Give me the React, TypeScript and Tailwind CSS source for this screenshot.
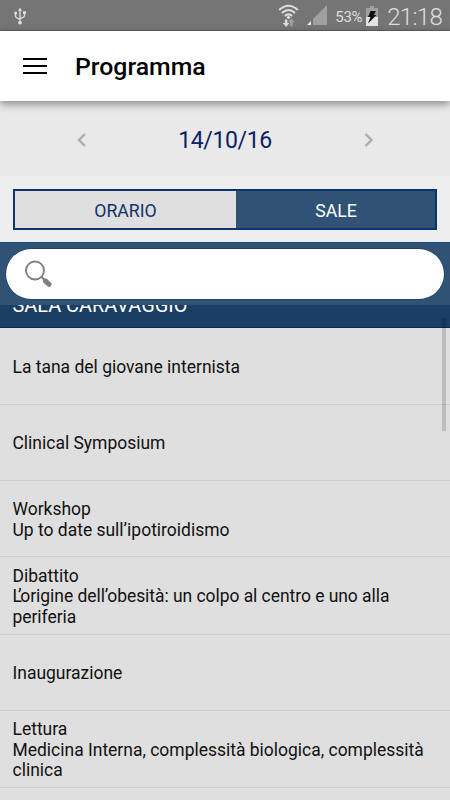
type Row = { lines: string[]; height: string };

const rows: Row[] = [
  { lines: ["La tana del giovane internista"], height: "h-[77px]" },
  { lines: ["Clinical Symposium"], height: "h-[76px]" },
  { lines: ["Workshop", "Up to date sull’ipotiroidismo"], height: "h-[76px]" },
  {
    lines: ["Dibattito", "L’origine dell’obesità: un colpo al centro e uno alla periferia"],
    height: "h-[78px]",
  },
  { lines: ["Inaugurazione"], height: "h-[76px]" },
  {
    lines: ["Lettura", "Medicina Interna, complessità biologica, complessità clinica"],
    height: "h-[77px]",
  },
];

function StatusBar() {
  return (
    <div className="flex h-[31px] shrink-0 items-center border-b border-[#5e5e5e] bg-[#757575] text-[#dedede]">
      <svg className="ml-[13px] mt-[2px] h-[18px] w-[14px]" viewBox="0 0 14 18" fill="none" stroke="currentColor" strokeWidth="1.3">
        <path d="M7 3v12M2.500 6.500v2.500q0 1.500 2 2.200L7 12.500M11.500 6v2.500q0 1.500-2 2.200L7 12" />
        <path d="M7 .5 9 4H5ZM10 4.200h3v2.800h-3Z" fill="currentColor" stroke="none" />
        <circle cx="2.600" cy="6" r="1.500" fill="currentColor" stroke="none" />
        <circle cx="7" cy="15.600" r="1.900" fill="currentColor" stroke="none" />
      </svg>

      <div className="ml-auto flex items-center">
        <svg className="mt-px h-[24px] w-[21px]" viewBox="0 0 22 24" preserveAspectRatio="none" fill="none" stroke="currentColor" strokeWidth="2">
          <path d="M1.200 6Q11-2.600 20.800 6M4.200 9.100Q11 2.900 17.800 9.100M7.200 12.100Q11 8.700 14.800 12.100" />
          <path d="M11 11.700l2.300 1.500L11 15.300l-2.300-2.100Z" fill="currentColor" stroke="none" />
          <path d="M7.200 15.500h2.600v3.500h2.100l-3.400 4L5.100 19h2.100Z" fill="currentColor" stroke="none" />
          <path d="M12.700 22.300h2.600v-4h2.100L14 14.300l-3.300 4h2Z" fill="#a3a3a3" stroke="none" />
        </svg>
        <svg className="ml-[8px] h-[20px] w-[20px]" viewBox="0 0 20 20">
          <path d="M20 0v20H6V14Z" fill="#a0a0a0" />
          <path d="M4 16v4H0Z" fill="#eee" />
        </svg>
        <span className="ml-[8px] mt-[4px] text-[15px] leading-none tracking-[-0.3px]">53%</span>
        <svg className="ml-[4px] mt-px h-[20px] w-[12px]" viewBox="0 0 12 20">
          <path d="M4 0h4v2h4v9H0V2h4Z" fill="#a0a0a0" />
          <path d="M0 11h12v9H0Z" fill="#e4e4e4" />
          <path d="M4.500 5H10L8 9h2.500L2 17.500 4.500 11H2Z" fill="#111" />
        </svg>
        <span className="ml-[9px] mr-[8px] mt-[4px] text-[24px] font-light leading-none tracking-[-0.7px]">21:18</span>
      </div>
    </div>
  );
}

function Header() {
  return (
    <header className="relative z-10 flex h-[70px] shrink-0 items-center bg-white shadow-[0_3px_8px_rgba(0,0,0,0.42)]">
      <button className="ml-[23px] flex w-6 flex-col gap-[5px]" aria-label="Menu">
        <span className="h-[2px] w-full bg-black" />
        <span className="h-[2px] w-full bg-black" />
        <span className="h-[2px] w-full bg-black" />
      </button>
      <h1 className="ml-[28px] mt-[3px] text-[24.800px] font-medium leading-none text-black">Programma</h1>
    </header>
  );
}

function DateBar() {
  return (
    <div className="flex h-[75px] shrink-0 items-center justify-between bg-[#e9e9e9] px-[77px] pt-[2px]">
      <svg className="h-[14px] w-[9px]" viewBox="0 0 9 14" fill="none" stroke="#adadad" strokeWidth="2.400">
        <path d="M8 1 2 7l6 6" />
      </svg>
      <span className="pt-px text-[23px] leading-none tracking-[-0.350px] text-[#0b2265]">14/10/16</span>
      <svg className="h-[14px] w-[9px]" viewBox="0 0 9 14" fill="none" stroke="#adadad" strokeWidth="2.400">
        <path d="M1.500 1l6 6-6 6" />
      </svg>
    </div>
  );
}

function Tabs() {
  return (
    <div className="h-[66px] shrink-0 bg-[#eeeeee] px-[13px] pt-[13px]">
      <div className="flex h-[41px] border-2 border-[#08366b] text-[17.700px]">
        <button className="w-[221px] bg-[#dfdfdf] pt-[3px] text-[#12326b]">ORARIO</button>
        <button className="flex-1 bg-[#2f5275] pl-[1px] pt-[3px] text-white">SALE</button>
      </div>
    </div>
  );
}

function SearchBar() {
  return (
    <div className="h-[63px] shrink-0 border-t border-[#124a78] bg-[#2f5275] px-[6px] pt-[6px]">
      <div className="flex h-[50px] items-center rounded-full bg-white pl-[19px] shadow-[0_0_0_0.500px_#0d3568]">
        <svg className="h-[28px] w-[28px]" viewBox="0 0 28 28" fill="none" stroke="#808080">
          <circle cx="10" cy="10.500" r="9" strokeWidth="1.900" />
          <path d="M16.500 17l3 3" strokeWidth="2" />
          <path d="M20.300 20.800l3.800 3.500" strokeWidth="5" strokeLinecap="round" />
        </svg>
      </div>
    </div>
  );
}

export default function App() {
  return (
    <div className="flex h-[800px] w-[450px] flex-col overflow-hidden bg-[#dfdfdf] font-['Roboto',sans-serif]">
      <StatusBar />
      <Header />
      <DateBar />
      <Tabs />
      <SearchBar />

      <div className="relative flex flex-col">
        {/* section title scrolled partly under the search bar */}
        <div className="flex h-[23px] shrink-0 items-end overflow-hidden border-b border-[#08245d] bg-[#1a3e64] pb-[9px] pl-[12.500px] text-[19.900px] leading-[24px] text-white">
          SALA CARAVAGGIO
        </div>

        {rows.map((row) => (
          <div
            key={row.lines[0]}
            className={`flex shrink-0 flex-col justify-center border-b border-[#cecece] px-[12.500px] pt-[2px] text-[17.480px] leading-[20.500px] text-[#111] ${row.height}`}
          >
            {row.lines.map((line) =>
              line.startsWith("L’") ? (
                <p key={line} className="tracking-[-0.040px]">
                  <span className="tracking-[-4px]">L</span>
                  {line.slice(1)}
                </p>
              ) : (
                <p key={line}>{line}</p>
              )
            )}
          </div>
        ))}

        {/* scroll thumb */}
        <div className="absolute right-[4px] top-[13px] h-[113px] w-[4px] bg-black/15" />
      </div>
    </div>
  );
}
